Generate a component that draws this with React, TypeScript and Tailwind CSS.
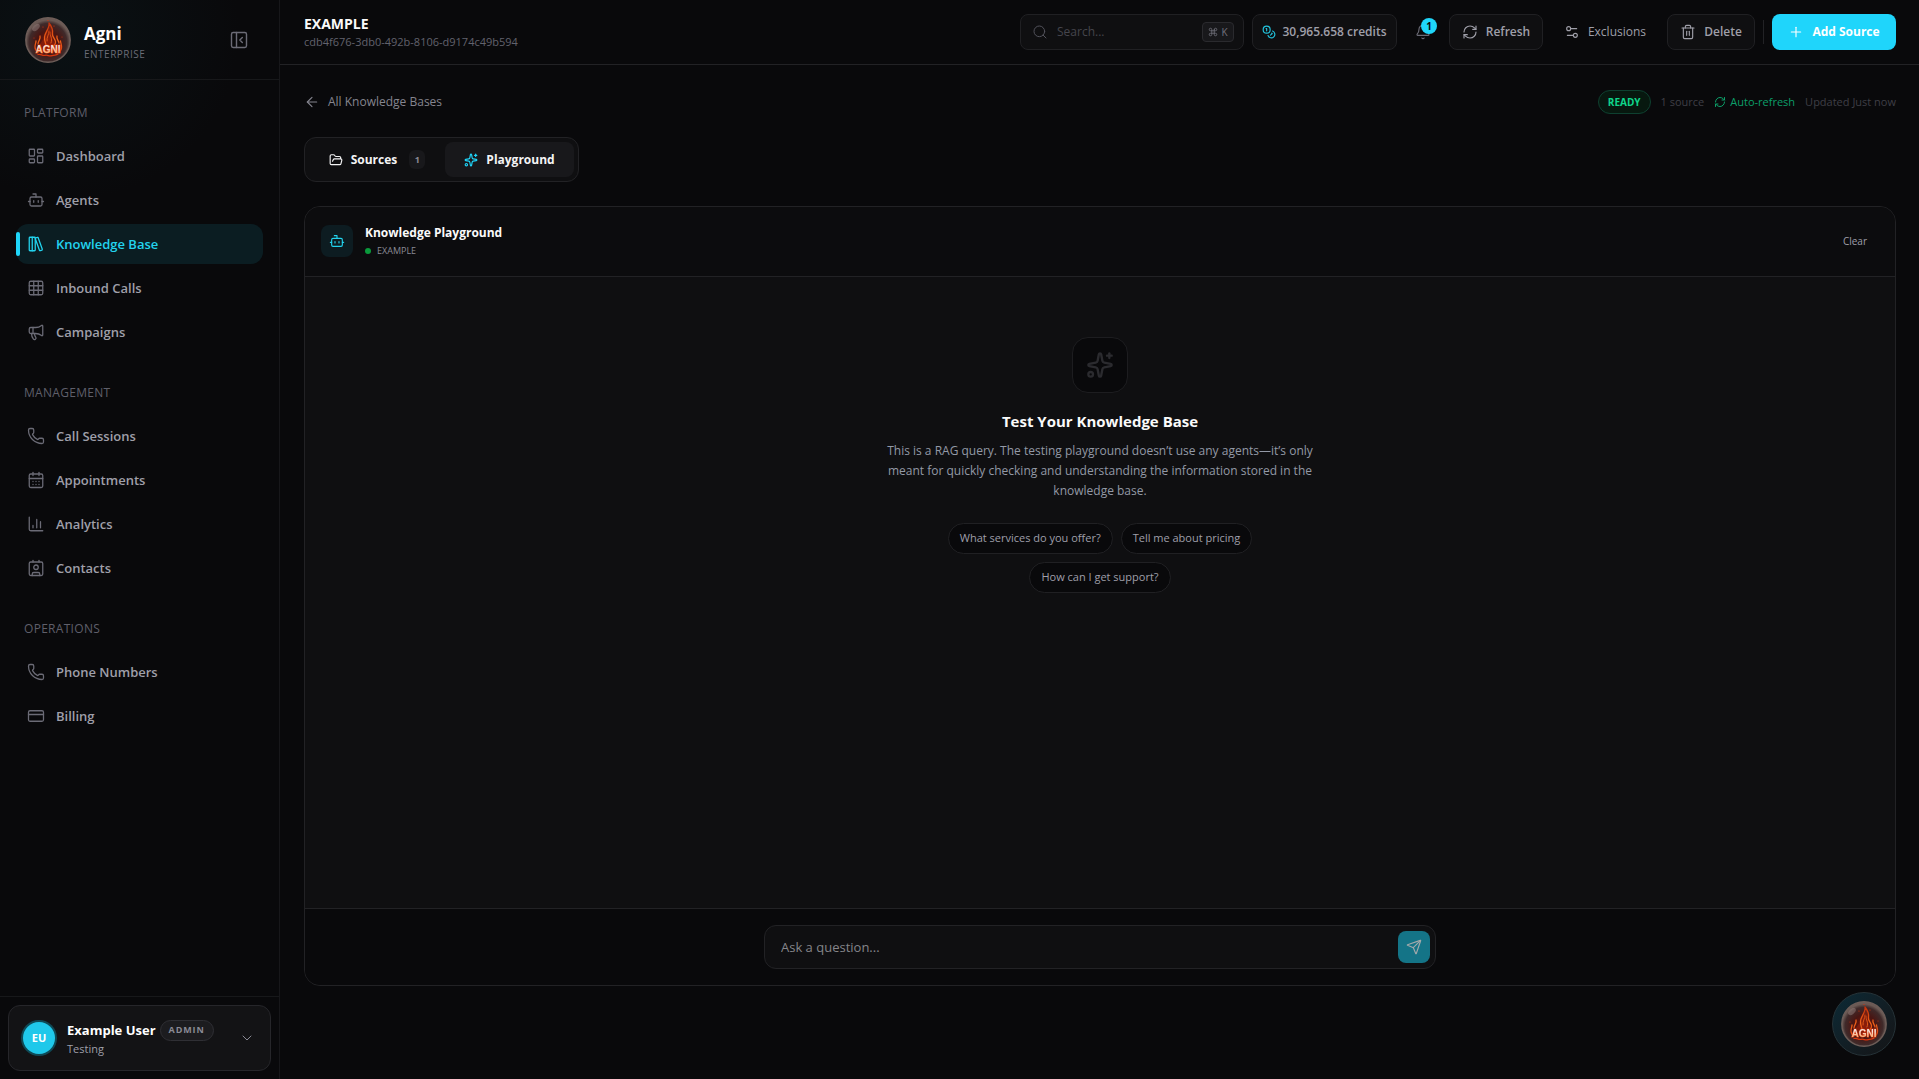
import type { LucideIcon } from 'lucide-react'
import {
  ArrowLeft,
  Bell,
  Bot,
  CalendarDays,
  ChevronDown,
  Coins,
  Command,
  Contact,
  CreditCard,
  FolderOpen,
  Grid3x3,
  LayoutDashboard,
  LibraryBig,
  Megaphone,
  PanelLeftClose,
  Phone,
  Plus,
  RefreshCw,
  Search,
  Send,
  Settings2,
  Sparkles,
  Trash2,
} from 'lucide-react'

interface NavItem {
  label: string
  icon: LucideIcon | typeof ChartIcon
  active?: boolean
}

function ChartIcon({ className }: { className?: string; size?: number; strokeWidth?: number }) {
  return (
    <svg viewBox="0 0 24 24" width="18" height="18" fill="none" stroke="currentColor" strokeWidth="1.7" strokeLinecap="round" className={className}>
      <path d="M3 3v16a2 2 0 0 0 2 2h16M8 17v-3M13 17V6M18 17v-8" />
    </svg>
  )
}

const sections: { title: string; items: NavItem[] }[] = [
  {
    title: 'Platform',
    items: [
      { label: 'Dashboard', icon: LayoutDashboard },
      { label: 'Agents', icon: Bot },
      { label: 'Knowledge Base', icon: LibraryBig, active: true },
      { label: 'Inbound Calls', icon: Grid3x3 },
      { label: 'Campaigns', icon: Megaphone },
    ],
  },
  {
    title: 'Management',
    items: [
      { label: 'Call Sessions', icon: Phone },
      { label: 'Appointments', icon: CalendarDays },
      { label: 'Analytics', icon: ChartIcon },
      { label: 'Contacts', icon: Contact },
    ],
  },
  {
    title: 'Operations',
    items: [
      { label: 'Phone Numbers', icon: Phone },
      { label: 'Billing', icon: CreditCard },
    ],
  },
]

const suggestions = ['What services do you offer?', 'Tell me about pricing', 'How can I get support?']

function AgniLogo({ id }: { id: string }) {
  return (
    <svg viewBox="0 0 46 46" className="size-[46px] shrink-0" role="img" aria-label="Agni">
      <defs>
        <radialGradient id={`${id}-orb`} cx="50%" cy="55%" r="50%">
          <stop offset="0" stopColor="#7a1508" />
          <stop offset="0.5" stopColor="#4a1512" />
          <stop offset="0.85" stopColor="#3f2a2a" />
          <stop offset="1" stopColor="#6b5a55" />
        </radialGradient>
        <linearGradient id={`${id}-flame`} gradientUnits="userSpaceOnUse" x1="0" y1="5" x2="0" y2="39">
          <stop offset="0" stopColor="#c02c0a" />
          <stop offset="0.5" stopColor="#f0641a" />
          <stop offset="1" stopColor="#d8350c" />
        </linearGradient>
        <linearGradient id={`${id}-text`} x1="0" y1="0" x2="0" y2="1">
          <stop offset="0.3" stopColor="#f5e4dc" />
          <stop offset="0.9" stopColor="#ffa25e" />
        </linearGradient>
      </defs>
      <circle cx="23" cy="23" r="22.2" fill={`url(#${id}-orb)`} stroke="#6e5d58" strokeWidth="1.4" />
      <ellipse cx="11" cy="10.5" rx="4.5" ry="2.6" fill="#a08a86" opacity="0.45" transform="rotate(-42 11 10.5)" />
      <path d="M24 6c1 5-5 10-5 15-2 4-7 8-6 14h20c2-5-4-8-5.500-13-.5-5 .5-11-3.500-16z" fill="#a8260a" opacity="0.45" />
      <g fill="none" stroke={`url(#${id}-flame)`} strokeWidth="1.3" strokeLinecap="round" strokeLinejoin="round">
        <path d="M24 6c1 5-4 9-4.500 14-.3 3 .5 5 1.500 8M24 6c4 5 4 8 3.500 11s3 5 3 8-1 3-2 4" />
        <path d="M24 14c0 4-2.500 6-2 10M25 15c-.5 4 3 6 1 11" strokeWidth="0.9" />
        <path d="M15 19c1 3-2 5-2 8M11 24c0 2-1 3-1 6 0 2 1 4 3 5M32 19c-1 3 2 5 2 7M35.500 24c0 2 1.500 4 1 7-.3 2-1.500 4-3.500 5" />
        <path d="M13 37.500c3-1 4 1.500 7 .8s4 1.500 7 .3 4 .3 6-1.500" />
      </g>
      <g fill="#d8350c">
        <circle cx="18" cy="10" r=".6" />
        <circle cx="29" cy="9" r=".6" />
        <circle cx="23" cy="3.500" r=".6" />
        <circle cx="9" cy="21" r=".5" />
        <circle cx="37" cy="20" r=".5" />
      </g>
      <text
        x="23"
        y="36"
        textAnchor="middle"
        fontSize="10"
        fontWeight="700"
        fill={`url(#${id}-text)`}
        stroke="#d9380f"
        strokeWidth="1"
        paintOrder="stroke"
        className="font-['Liberation_Sans',sans-serif]"
      >
        AGNI
      </text>
    </svg>
  )
}

function Sidebar() {
  return (
    <aside className="flex w-[280px] shrink-0 flex-col border-r border-[#17171a] bg-[radial-gradient(circle_at_70px_30px,#0a1114_0,#09090b_170px)]">
      <div className="flex h-20 items-center border-b border-[#17181a] pr-[30px] pl-[25px]">
        <AgniLogo id="brand" />
        <div className="ml-[13px] flex-1 pt-1">
          <p className="text-[17px] leading-6 font-bold text-white">Agni</p>
          <p className="text-[10px] leading-4 font-medium tracking-wider text-[#6b6b76]">ENTERPRISE</p>
        </div>
        <button aria-label="Collapse sidebar" className="text-[#6b6b76]">
          <PanelLeftClose size={20} strokeWidth={1.7} />
        </button>
      </div>

      <nav className="flex flex-1 flex-col gap-8 pt-6">
        {sections.map((section) => (
          <div key={section.title}>
            <h2 className="mb-4 pt-px pl-6 text-xs leading-[15px] font-medium tracking-wide text-[#5f5f6a] uppercase">{section.title}</h2>
            <ul className="flex flex-col gap-1 px-4">
              {section.items.map(({ label, icon: Icon, active }) => (
                <li key={label}>
                  <a
                    href="#"
                    className={`relative flex h-10 items-center gap-[11px] rounded-xl pl-[11px] text-[13px] font-semibold ${
                      active ? 'bg-[#0b1d22] text-[#22d3ee]' : 'text-[#9f9fa9]'
                    }`}
                  >
                    {active && <span className="absolute top-2 left-0 h-6 w-1 rounded-full bg-[#1fd5f9]" />}
                    <Icon size={18} strokeWidth={1.7} className={active ? 'text-[#22d3ee]' : 'text-[#6b6b76]'} />
                    <span className="pt-px">{label}</span>
                  </a>
                </li>
              ))}
            </ul>
          </div>
        ))}
      </nav>

      <div className="border-t border-[#17181a] p-2">
        <button className="flex h-[66px] w-full items-center rounded-xl border border-[#26262a] bg-[#131315] pr-[15px] pl-[14px] text-left">
          <span className="flex size-8 items-center justify-center rounded-full bg-[#1fc8ea] text-[11px] font-bold text-white ring-2 ring-[#0f4955]">
            EU
          </span>
          <span className="ml-3 flex-1">
            <span className="flex items-center gap-1">
              <span className="text-[13px] leading-5 font-bold text-white">Example User</span>
              <span className="flex h-[21px] items-center rounded-full border border-[#2f2f34] bg-[#1c1c1f] px-2 text-[9px] font-bold tracking-widest text-[#8a8a94]">
                ADMIN
              </span>
            </span>
            <span className="block text-[11px] leading-4 text-[#9f9fa9]">Testing</span>
          </span>
          <ChevronDown size={16} strokeWidth={1.5} className="text-[#8a8a94]" />
        </button>
      </div>
    </aside>
  )
}

function Header() {
  return (
    <header className="flex h-[65px] shrink-0 items-center gap-2 border-b border-[#222225] pr-[23px] pl-6">
      <div className="flex-1 pb-px">
        <h1 className="text-sm leading-5 font-bold text-[#fafafa]">EXAMPLE</h1>
        <p className="text-[11px] leading-4 text-[#62626d]">cdb4f676-3db0-492b-8106-d9174c49b594</p>
      </div>

      <label className="flex h-9 w-56 items-center rounded-lg border border-[#202023] bg-[#0f0f11] pr-[9px] pl-[11px]">
        <Search size={16} strokeWidth={1.5} className="shrink-0 text-[#52525b]" />
        <input
          type="search"
          aria-label="Search"
          placeholder="Search..."
          className="ml-[9px] w-full min-w-0 bg-transparent text-xs outline-none placeholder:text-[#45454c]"
        />
        <kbd className="flex h-5 w-8 shrink-0 items-center justify-center gap-[3px] rounded border border-[#2a2a2e] bg-[#18181b] font-['Open_Sans',sans-serif] text-[10px] text-[#71717b]">
          <Command size={10} strokeWidth={2} />K
        </kbd>
      </label>

      <button className="flex h-9 w-[145px] items-center justify-center gap-1.5 rounded-lg border border-[#202023] bg-[#0f0f11] text-xs font-semibold text-[#9f9fa9]">
        <Coins size={14} strokeWidth={2} className="text-[#22c3dd]" />
        30,965.658 credits
      </button>

      <button aria-label="Notifications" className="relative flex size-9 items-center justify-center text-[#6b6b76]">
        <Bell size={16} strokeWidth={1.7} />
        <span className="absolute top-1 right-1 flex size-4 items-center justify-center rounded-full bg-[#1fd5f9] text-[10px] font-bold text-[#09090b]">
          1
        </span>
      </button>

      <button className="flex h-9 w-[94px] items-center justify-center gap-2 rounded-lg border border-[#202023] bg-[#0f0f11] text-xs font-semibold text-[#9f9fa9]">
        <RefreshCw size={16} strokeWidth={1.7} />
        Refresh
      </button>
      <button className="flex h-9 w-[108px] items-center justify-center gap-2 text-xs font-medium text-[#9f9fa9]">
        <Settings2 size={16} strokeWidth={1.7} />
        Exclusions
      </button>
      <button className="flex h-9 w-[88px] items-center justify-center gap-2 rounded-lg border border-[#202023] bg-[#0f0f11] text-xs font-semibold text-[#9f9fa9]">
        <Trash2 size={16} strokeWidth={1.7} />
        Delete
      </button>
      <span className="h-6 w-px bg-[#222225]" />
      <button className="flex h-9 w-[124px] items-center justify-center gap-2 rounded-lg bg-[#1fd5fb] text-xs font-bold text-white">
        <Plus size={16} strokeWidth={1.7} />
        Add Source
      </button>
    </header>
  )
}

function StatusRow() {
  return (
    <div className="flex h-[26px] items-center justify-between">
      <a href="#" className="flex items-center gap-2 text-xs text-[#85858f]">
        <ArrowLeft size={16} strokeWidth={1.7} />
        All Knowledge Bases
      </a>
      <div className="flex items-center gap-2.5 text-[11px] text-[#3f3f46]">
        <span className="flex h-6 items-center rounded-full border border-[#0e4030] bg-[#07180f] px-[9px] text-[10px] font-bold text-[#0fd58b]">
          READY
        </span>
        <span>1 source</span>
        <span className="flex items-center gap-1 text-[#0c9f69]">
          <RefreshCw size={12} strokeWidth={2} />
          Auto-refresh
        </span>
        <span>Updated Just now</span>
      </div>
    </div>
  )
}

function Tabs() {
  return (
    <div role="tablist" className="mt-[22px] flex w-fit rounded-xl border border-[#222225] bg-[#0f0f11] p-1 text-xs font-bold text-[#f4f4f5]">
      <button role="tab" aria-selected="false" className="flex h-[35px] w-[136px] items-center justify-center rounded-lg">
        <FolderOpen size={14} strokeWidth={2} />
        <span className="ml-2">Sources</span>
        <span className="ml-3 flex h-[19px] w-4 items-center justify-center rounded-md bg-[#18181b] text-[9px] text-[#8a8a94]">1</span>
      </button>
      <button role="tab" aria-selected="true" className="flex h-[35px] w-[129px] items-center justify-center gap-2 rounded-lg bg-[#18181b]">
        <Sparkles size={14} strokeWidth={2} className="text-[#1fd5f9]" />
        Playground
      </button>
    </div>
  )
}

function Playground() {
  return (
    <section className="mt-6 flex h-[calc(100vh-299px)] flex-col overflow-hidden rounded-2xl border border-[#222225] bg-[#0f0f11]">
      <div className="flex h-[70px] shrink-0 items-center border-b border-[#222225] bg-[#0c0c0e] px-4 pb-px">
        <span className="flex size-8 items-center justify-center rounded-lg bg-[#0d1c21] text-[#22d3ee]">
          <Bot size={16} strokeWidth={1.7} />
        </span>
        <div className="ml-3 flex-1">
          <h2 className="text-xs leading-5 font-bold text-[#fafafa]">Knowledge Playground</h2>
          <p className="flex items-center gap-1.5 text-[9px] leading-4 text-[#8a8a94]">
            <span className="size-1.5 rounded-full bg-[#0a9a3c]" />
            EXAMPLE
          </p>
        </div>
        <button className="px-3 text-[10px] font-medium text-[#9f9fa9]">Clear</button>
      </div>

      <div className="flex flex-1 flex-col items-center pt-[60px]">
        <span className="flex size-14 items-center justify-center rounded-2xl border border-[#1d1d20] bg-[#09090b] text-[#2b2b2f]">
          <Sparkles size={28} strokeWidth={2} />
        </span>
        <h3 className="mt-4 text-[15px] leading-6 font-bold text-[#fafafa]">Test Your Knowledge Base</h3>
        <p className="mt-2 w-full max-w-md text-center text-xs leading-5 text-[#9399a6]">
          This is a RAG query. The testing playground doesn’t use any agents—it’s only meant for quickly checking and
          understanding the information stored in the knowledge base.
        </p>
        <div className="mt-[22px] flex max-w-sm flex-wrap justify-center gap-2">
          {suggestions.map((text) => (
            <button key={text} className="h-[31px] rounded-full border border-[#202023] bg-[#09090b] px-[11px] text-[11px] text-[#9f9fa9]">
              {text}
            </button>
          ))}
        </div>
      </div>

      <form className="flex shrink-0 justify-center border-t border-[#222225] bg-[#09090b] py-4" onSubmit={(e) => e.preventDefault()}>
        <div className="flex h-11 w-full max-w-2xl items-center rounded-xl border border-[#222225] bg-[#0f0f11] pr-[5px] pl-4">
          <input
            aria-label="Ask a question"
            placeholder="Ask a question..."
            className="min-w-0 flex-1 bg-transparent pt-0.5 text-[13px] outline-none placeholder:text-[#85858a]"
          />
          <button aria-label="Send" className="flex size-8 items-center justify-center rounded-lg bg-[#147487] text-[#a3a9ab]">
            <Send size={16} strokeWidth={1.7} />
          </button>
        </div>
      </form>
    </section>
  )
}

export default function App() {
  return (
    <div className="flex min-h-screen bg-[#09090b] font-['Open_Sans','Noto_Sans',sans-serif]">
      <Sidebar />
      <div className="flex min-w-0 flex-1 flex-col">
        <Header />
        <main className="pt-6 pr-[23px] pl-6">
          <StatusRow />
          <Tabs />
          <Playground />
        </main>
      </div>
      <button
        aria-label="Open assistant"
        className="fixed right-[23px] bottom-[23px] flex size-16 items-center justify-center rounded-full border border-[#263338] bg-linear-to-br from-[#0a2a36] to-[#141416]"
      >
        <AgniLogo id="chat" />
      </button>
    </div>
  )
}
